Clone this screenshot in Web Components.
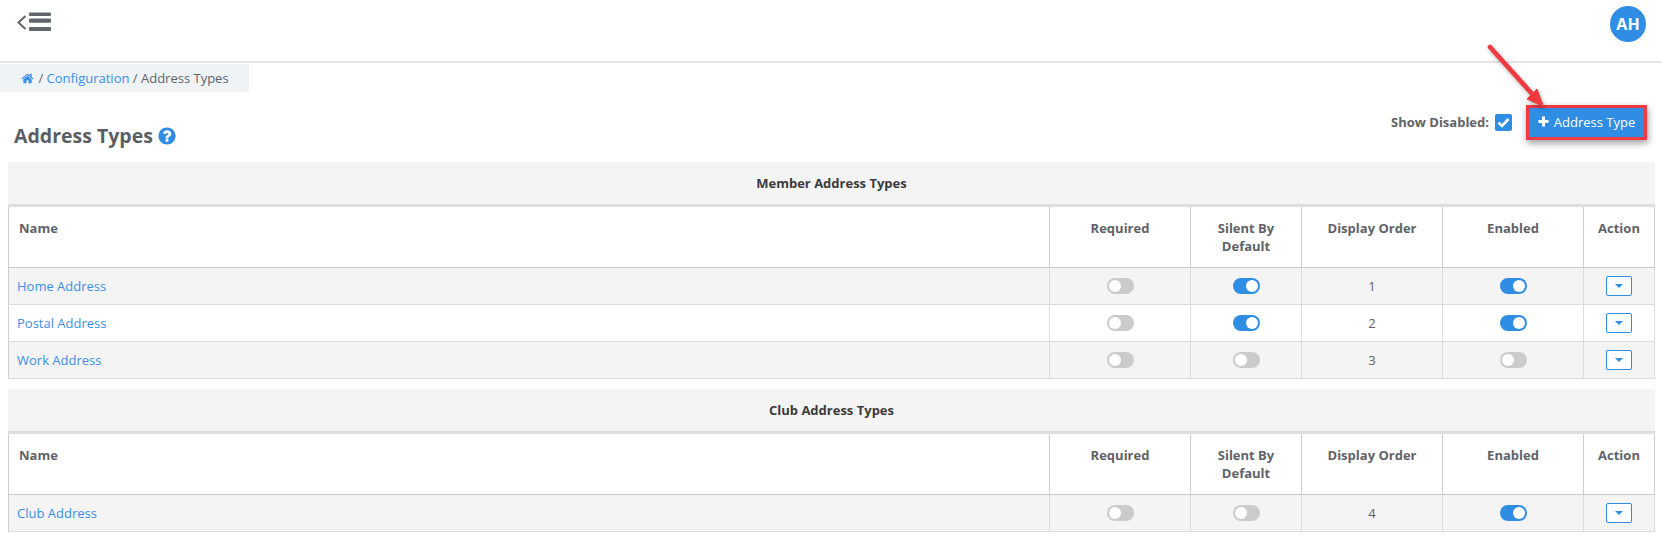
<!DOCTYPE html>
<html>
<head>
<meta charset="utf-8">
<title>Address Types</title>
<style>
  html, body { margin: 0; padding: 0; background: #fff; }
  body { font: 13px "Open Sans", "Liberation Sans", sans-serif; color: #5f6368; height: 541px; overflow: hidden; position: relative; }
</style>
</head>
<body>
<app-header initials="AH"></app-header>
<bread-crumb current="Address Types">Configuration</bread-crumb>
<page-toolbar heading="Address Types"></page-toolbar>
<callout-arrow></callout-arrow>

<address-table caption="Member Address Types">
  <address-row name="Home Address" silent enabled order="1"></address-row>
  <address-row name="Postal Address" silent enabled order="2"></address-row>
  <address-row name="Work Address" order="3"></address-row>
</address-table>

<address-table caption="Club Address Types">
  <address-row name="Club Address" enabled order="4"></address-row>
</address-table>

<script>
const COLUMNS = "1fr 141px 111px 141px 141px 72px";

const HOME_PATH = "M1472 992v480q0 26-19 45t-45 19h-384v-384h-256v384h-384q-26 0-45-19t-19-45v-480q0-1 .5-3t.5-3l575-474 575 474q1 2 1 6zm223-69l-62 74q-8 9-21 11h-3q-13 0-21-7l-692-577-692 577q-12 8-24 7-13-2-21-11l-62-74q-8-10-7-23.5t11-21.5l719-599q32-26 76-26t76 26l244 204v-195q0-14 9-23t23-9h192q14 0 23 9t9 23v408l219 182q10 8 11 21.5t-7 23.5z";
const HELP_PATH = "M1024 1376v-192q0-14-9-23t-23-9h-192q-14 0-23 9t-9 23v192q0 14 9 23t23 9h192q14 0 23-9t9-23zm256-672q0-88-55.5-163t-138.5-116-170-41q-243 0-371 213-15 24 8 42l132 100q7 6 19 6 16 0 25-12 53-68 86-92 34-24 86-24 48 0 85.5 26t37.5 59q0 38-20 61t-68 45q-63 28-115.5 86.5t-52.5 125.5v36q0 14 9 23t23 9h192q14 0 23-9t9-23q0-19 21.5-49.5t54.5-49.5q32-18 49-28.5t46-35 44.5-48 28-60.5 12.5-81zm384 192q0 209-103 385.5t-279.5 279.5-385.5 103-385.5-103-279.5-279.5-103-385.5 103-385.5 279.5-279.5 385.5-103 385.5 103 279.5 279.5 103 385.5z";

class AppHeader extends HTMLElement {
  constructor() {
    super();
    this.attachShadow({ mode: "open" });
    this.shadowRoot.innerHTML = `
      <style>
        :host {
          display: flex;
          justify-content: space-between;
          align-items: flex-start;
          height: 55px;
          border-bottom: 2px solid #e4e4e4;
          padding: 6px 16px 0 17px;
          margin-bottom: 1px;
        }
        svg { display: block; margin-top: 6px; }
        .avatar {
          width: 36px;
          height: 36px;
          border-radius: 50%;
          background: #2f8de4;
          color: #fff;
          font-weight: 700;
          font-size: 16px;
          display: flex;
          align-items: center;
          justify-content: center;
        }
      </style>
      <svg width="34" height="20" viewBox="0 0 34 20">
        <path d="M8.5 4 L1.5 10.5 L8.5 17" fill="none" stroke="#5f666d" stroke-width="2"/>
        <rect x="12" y="0.5" width="22" height="3.6" rx="1" fill="#5f666d"/>
        <rect x="12" y="6.5" width="22" height="4.2" rx="1" fill="#5f666d"/>
        <rect x="12" y="15" width="22" height="4" rx="1" fill="#5f666d"/>
      </svg>
      <div class="avatar">${this.getAttribute("initials")}</div>
    `;
  }
}
customElements.define("app-header", AppHeader);

class BreadCrumb extends HTMLElement {
  constructor() {
    super();
    this.attachShadow({ mode: "open" });
    this.shadowRoot.innerHTML = `
      <style>
        :host {
          display: flex;
          align-items: center;
          width: 228px;
          height: 28px;
          padding-left: 21px;
          background: #eff3f6;
          color: #5f6368;
          font-size: 13px;
        }
        svg { width: 13px; height: 13px; fill: #3b8fe6; margin-right: 1px; }
        a { color: #3b8fe6; text-decoration: none; }
        span { white-space: pre; }
      </style>
      <svg viewBox="0 0 1792 1792"><path d="${HOME_PATH}"/></svg>
      <span> / </span><a href="#"><slot></slot></a><span> / ${this.getAttribute("current")}</span>
    `;
  }
}
customElements.define("bread-crumb", BreadCrumb);

class PageToolbar extends HTMLElement {
  constructor() {
    super();
    this.attachShadow({ mode: "open" });
    this.shadowRoot.innerHTML = `
      <style>
        :host {
          display: flex;
          justify-content: space-between;
          align-items: flex-start;
          height: 70px;
          padding: 0 18px 0 14px;
        }
        h1 {
          margin: 30px 0 0;
          font-size: 19.5px;
          line-height: 28px;
          font-weight: 700;
          color: #5a5f66;
          display: flex;
          align-items: center;
          gap: 4px;
        }
        h1 svg { width: 20px; height: 20px; fill: #2f8de4; }
        .controls { display: flex; align-items: center; margin-top: 16px; height: 29px; }
        label { font-weight: 700; font-size: 13px; color: #5f6368; margin: 0 6px 2px 0; }
        .check {
          width: 17px;
          height: 17px;
          background: #2f8de4;
          border-radius: 2px;
          margin-right: 17px;
          display: flex;
          align-items: center;
          justify-content: center;
        }
        button {
          width: 115px;
          height: 29px;
          border: 0;
          padding: 0 0 2px;
          background: #2f8de4;
          color: #fff;
          font: 13px "Open Sans", "Liberation Sans", sans-serif;
          display: flex;
          align-items: center;
          justify-content: center;
          gap: 5px;
          /* red box is part of the annotation, not the button */
          box-shadow: 0 0 0 3px #f13a40, 1px 3px 7px 3px rgba(0,0,0,.4);
        }
      </style>
      <h1>${this.getAttribute("heading")}<svg viewBox="0 0 1792 1792"><path d="${HELP_PATH}"/></svg></h1>
      <div class="controls">
        <label>Show Disabled:</label>
        <div class="check">
          <svg width="13" height="11" viewBox="0 0 13 11"><path d="M1.5 5.5 L5 9 L11.5 2" fill="none" stroke="#fff" stroke-width="2.6"/></svg>
        </div>
        <button>
          <svg width="11" height="11" viewBox="0 0 11 11"><path d="M4 0.5h3v3.5h3.5v3H7v3.5H4V7H0.5V4H4z" fill="#fff"/></svg>
          Address Type
        </button>
      </div>
    `;
  }
}
customElements.define("page-toolbar", PageToolbar);

// red annotation arrow drawn over the page
class CalloutArrow extends HTMLElement {
  constructor() {
    super();
    this.attachShadow({ mode: "open" });
    this.shadowRoot.innerHTML = `
      <style>
        :host { position: absolute; left: 1480px; top: 40px; width: 70px; height: 70px; pointer-events: none; }
        svg { display: block; overflow: visible; filter: drop-shadow(1px 2px 2px rgba(0,0,0,.3)); }
      </style>
      <svg width="70" height="70" viewBox="0 0 70 70">
        <path d="M10 7 L54 56" stroke="#f13a40" stroke-width="4.6" stroke-linecap="round" fill="none"/>
        <path d="M63.5 66.5 L57 49 L47 59 Z" fill="#f13a40" stroke="#f13a40" stroke-width="1"/>
      </svg>
    `;
  }
}
customElements.define("callout-arrow", CalloutArrow);

class ToggleSwitch extends HTMLElement {
  constructor() {
    super();
    this.attachShadow({ mode: "open" });
    this.shadowRoot.innerHTML = `
      <style>
        :host { display: block; width: 27px; height: 16px; border-radius: 8px; background: #cbcbcb; position: relative; }
        :host([on]) { background: #2f8de4; }
        i { position: absolute; top: 2px; left: 2px; width: 12px; height: 12px; border-radius: 50%; background: #fff; }
        :host([on]) i { left: 13px; }
      </style>
      <i></i>
    `;
  }
}
customElements.define("toggle-switch", ToggleSwitch);

class ActionMenu extends HTMLElement {
  constructor() {
    super();
    this.attachShadow({ mode: "open" });
    this.shadowRoot.innerHTML = `
      <style>
        :host {
          display: flex;
          align-items: center;
          justify-content: center;
          box-sizing: border-box;
          width: 26px;
          height: 20px;
          background: #fff;
          border: 1px solid #2f8de4;
          border-radius: 2px;
        }
        i { border: 4px solid transparent; border-top: 4.5px solid #2f8de4; border-bottom: 0; margin-top: -1px; }
      </style>
      <i></i>
    `;
  }
}
customElements.define("action-menu", ActionMenu);

class AddressRow extends HTMLElement {
  constructor() {
    super();
    const toggle = (attr) => `<toggle-switch ${this.hasAttribute(attr) ? "on" : ""}></toggle-switch>`;
    this.attachShadow({ mode: "open" });
    this.shadowRoot.innerHTML = `
      <style>
        :host {
          display: grid;
          grid-template-columns: ${COLUMNS};
          height: 37px;
          box-sizing: border-box;
          border-bottom: 1px solid #dcdcdc;
          background: #fff;
        }
        :host(:nth-child(odd)) { background: #f4f4f4; }
        div { display: flex; align-items: center; justify-content: center; border-left: 1px solid #dcdcdc; }
        div:last-child { border-right: 1px solid #dcdcdc; }
        .name { justify-content: flex-start; padding-left: 8px; border-left-color: #cfcfcf; }
        a { color: #3b8fe6; text-decoration: none; }
      </style>
      <div class="name"><a href="#">${this.getAttribute("name")}</a></div>
      <div><toggle-switch></toggle-switch></div>
      <div>${toggle("silent")}</div>
      <div>${this.getAttribute("order")}</div>
      <div>${toggle("enabled")}</div>
      <div><action-menu></action-menu></div>
    `;
  }
}
customElements.define("address-row", AddressRow);

class AddressTable extends HTMLElement {
  constructor() {
    super();
    this.attachShadow({ mode: "open" });
    this.shadowRoot.innerHTML = `
      <style>
        :host { display: block; margin: 0 7px 10px 8px; }
        .caption {
          height: 42px;
          display: flex;
          align-items: center;
          justify-content: center;
          background: #f4f4f4;
          border-bottom: 3px solid #dedede;
          font-weight: 700;
          color: #3b3b3b;
        }
        .head {
          display: grid;
          grid-template-columns: ${COLUMNS};
          height: 61px;
          box-sizing: border-box;
          border-bottom: 1px solid #c8c8ce;
          font-weight: 700;
          color: #5f6368;
          line-height: 18px;
        }
        .head div { border-left: 1px solid #cdcdd2; text-align: center; padding-top: 12px; }
        .head div:first-child { text-align: left; padding-left: 10px; }
        .head div:last-child { border-right: 1px solid #cdcdd2; }
      </style>
      <div class="caption">${this.getAttribute("caption")}</div>
      <div class="head">
        <div>Name</div>
        <div>Required</div>
        <div>Silent By<br>Default</div>
        <div>Display Order</div>
        <div>Enabled</div>
        <div>Action</div>
      </div>
      <slot></slot>
    `;
  }
}
customElements.define("address-table", AddressTable);
</script>
</body>
</html>
